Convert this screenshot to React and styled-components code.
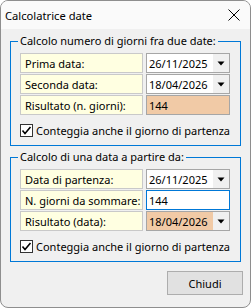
import React from "react";
import styled, { createGlobalStyle } from "styled-components";

const Global = createGlobalStyle`
  html, body { margin: 0; padding: 0; background: #ffffff; }
  * { box-sizing: border-box; }
`;

const FONT = `"Noto Sans", "Open Sans", sans-serif`;

const Window = styled.div`
  width: 251px;
  height: 308px;
  border: 1px solid #8e8e8e;
  border-radius: 8px;
  background: #f0f0f0;
  overflow: hidden;
  display: flex;
  flex-direction: column;
  font-family: ${FONT};
  font-size: 11px;
  color: #000;
`;

const TitleBar = styled.div`
  height: 28px;
  flex: none;
  background: #fafafa;
  display: flex;
  align-items: center;
  justify-content: space-between;
  padding: 0 9px 0 4px;
  font-size: 11.2px;
`;

const CloseBtn = styled.div`
  width: 14px;
  height: 14px;
  display: flex;
  align-items: center;
  justify-content: center;
`;

const Body = styled.div`
  flex: 1;
  display: flex;
  flex-direction: column;
  padding: 4px 9px 0 9px;
`;

const Group = styled.fieldset`
  margin: ${(p) => (p.$second ? "3px" : "0")} 0 0 0;
  border: 1px solid #0078d7;
  padding: 4px 10px 7px 9px;
  min-width: 0;
`;

const Legend = styled.legend`
  padding: 0 2px;
  margin-left: -2px;
  line-height: 16px;
  font-size: 11px;
`;

const Rows = styled.div`
  display: grid;
  grid-template-columns: 123px 84px;
  grid-auto-rows: 20px;
  column-gap: 3px;
  row-gap: 1px;
`;

const Label = styled.div`
  border: 1px solid #c9c9c9;
  background: #ffffe1;
  padding-left: 4px;
  display: flex;
  align-items: center;
  white-space: nowrap;
`;

const Field = styled.div`
  border: 1px solid ${(p) => (p.$focus ? "#0078d7" : "#a6a6a6")};
  background: ${(p) => (p.$result ? "#f1caa6" : "#ffffff")};
  padding-left: 2px;
  display: flex;
  align-items: center;
  white-space: nowrap;
`;

const FieldText = styled.span`
  flex: 1;
`;

const ArrowBox = styled.div`
  width: 16px;
  height: 100%;
  background: #f0f0f0;
  display: flex;
  align-items: center;
  justify-content: center;
`;

const CheckRow = styled.label`
  display: flex;
  align-items: center;
  gap: 3px;
  margin-top: 7px;
  height: 16px;
  white-space: nowrap;
`;

const Box = styled.span`
  width: 13px;
  height: 13px;
  border: 1px solid #333333;
  background: #ffffff;
  display: flex;
  align-items: center;
  justify-content: center;
  flex: none;
`;

const Footer = styled.div`
  display: flex;
  justify-content: flex-end;
  padding: 9px 7px 0 0;
  margin-right: -9px;
`;

const Button = styled.button`
  width: 76px;
  height: 24px;
  border: 1px solid #adadad;
  background: #e1e1e1;
  font-family: ${FONT};
  font-size: 11px;
  color: #000;
  padding: 0;
`;

const Arrow = () => (
  <svg width="8" height="5" viewBox="0 0 8 5">
    <path d="M0.5 0.5 L7.5 0.5 L4 4.5 Z" fill="#000" />
  </svg>
);

const Combo = ({ value, result }) => (
  <Field $result={result}>
    <FieldText>{value}</FieldText>
    <ArrowBox>
      <Arrow />
    </ArrowBox>
  </Field>
);

const Check = () => (
  <CheckRow>
    <Box>
      <svg width="11" height="11" viewBox="0 0 11 11">
        <path d="M1.5 5.5 L4 8.5 L9.5 2" fill="none" stroke="#000" strokeWidth="1.6" />
      </svg>
    </Box>
    Conteggia anche il giorno di partenza
  </CheckRow>
);

export default function App() {
  return (
    <>
      <Global />
      <Window>
        <TitleBar>
          <span>Calcolatrice date</span>
          <CloseBtn>
            <svg width="12" height="12" viewBox="0 0 12 12">
              <path d="M0.5 0.5 L11.5 11.5 M11.5 0.5 L0.5 11.5" stroke="#000" strokeWidth="1" />
            </svg>
          </CloseBtn>
        </TitleBar>
        <Body>
          <Group>
            <Legend>Calcolo numero di giorni fra due date:</Legend>
            <Rows>
              <Label>Prima data:</Label>
              <Combo value="26/11/2025" />
              <Label>Seconda data:</Label>
              <Combo value="18/04/2026" />
              <Label>Risultato (n. giorni):</Label>
              <Field $result>144</Field>
            </Rows>
            <Check />
          </Group>
          <Group $second>
            <Legend>Calcolo di una data a partire da:</Legend>
            <Rows>
              <Label>Data di partenza:</Label>
              <Combo value="26/11/2025" />
              <Label>N. giorni da sommare:</Label>
              <Field $focus>144</Field>
              <Label>Risultato (data):</Label>
              <Combo value="18/04/2026" result />
            </Rows>
            <Check />
          </Group>
          <Footer>
            <Button>Chiudi</Button>
          </Footer>
        </Body>
      </Window>
    </>
  );
}
